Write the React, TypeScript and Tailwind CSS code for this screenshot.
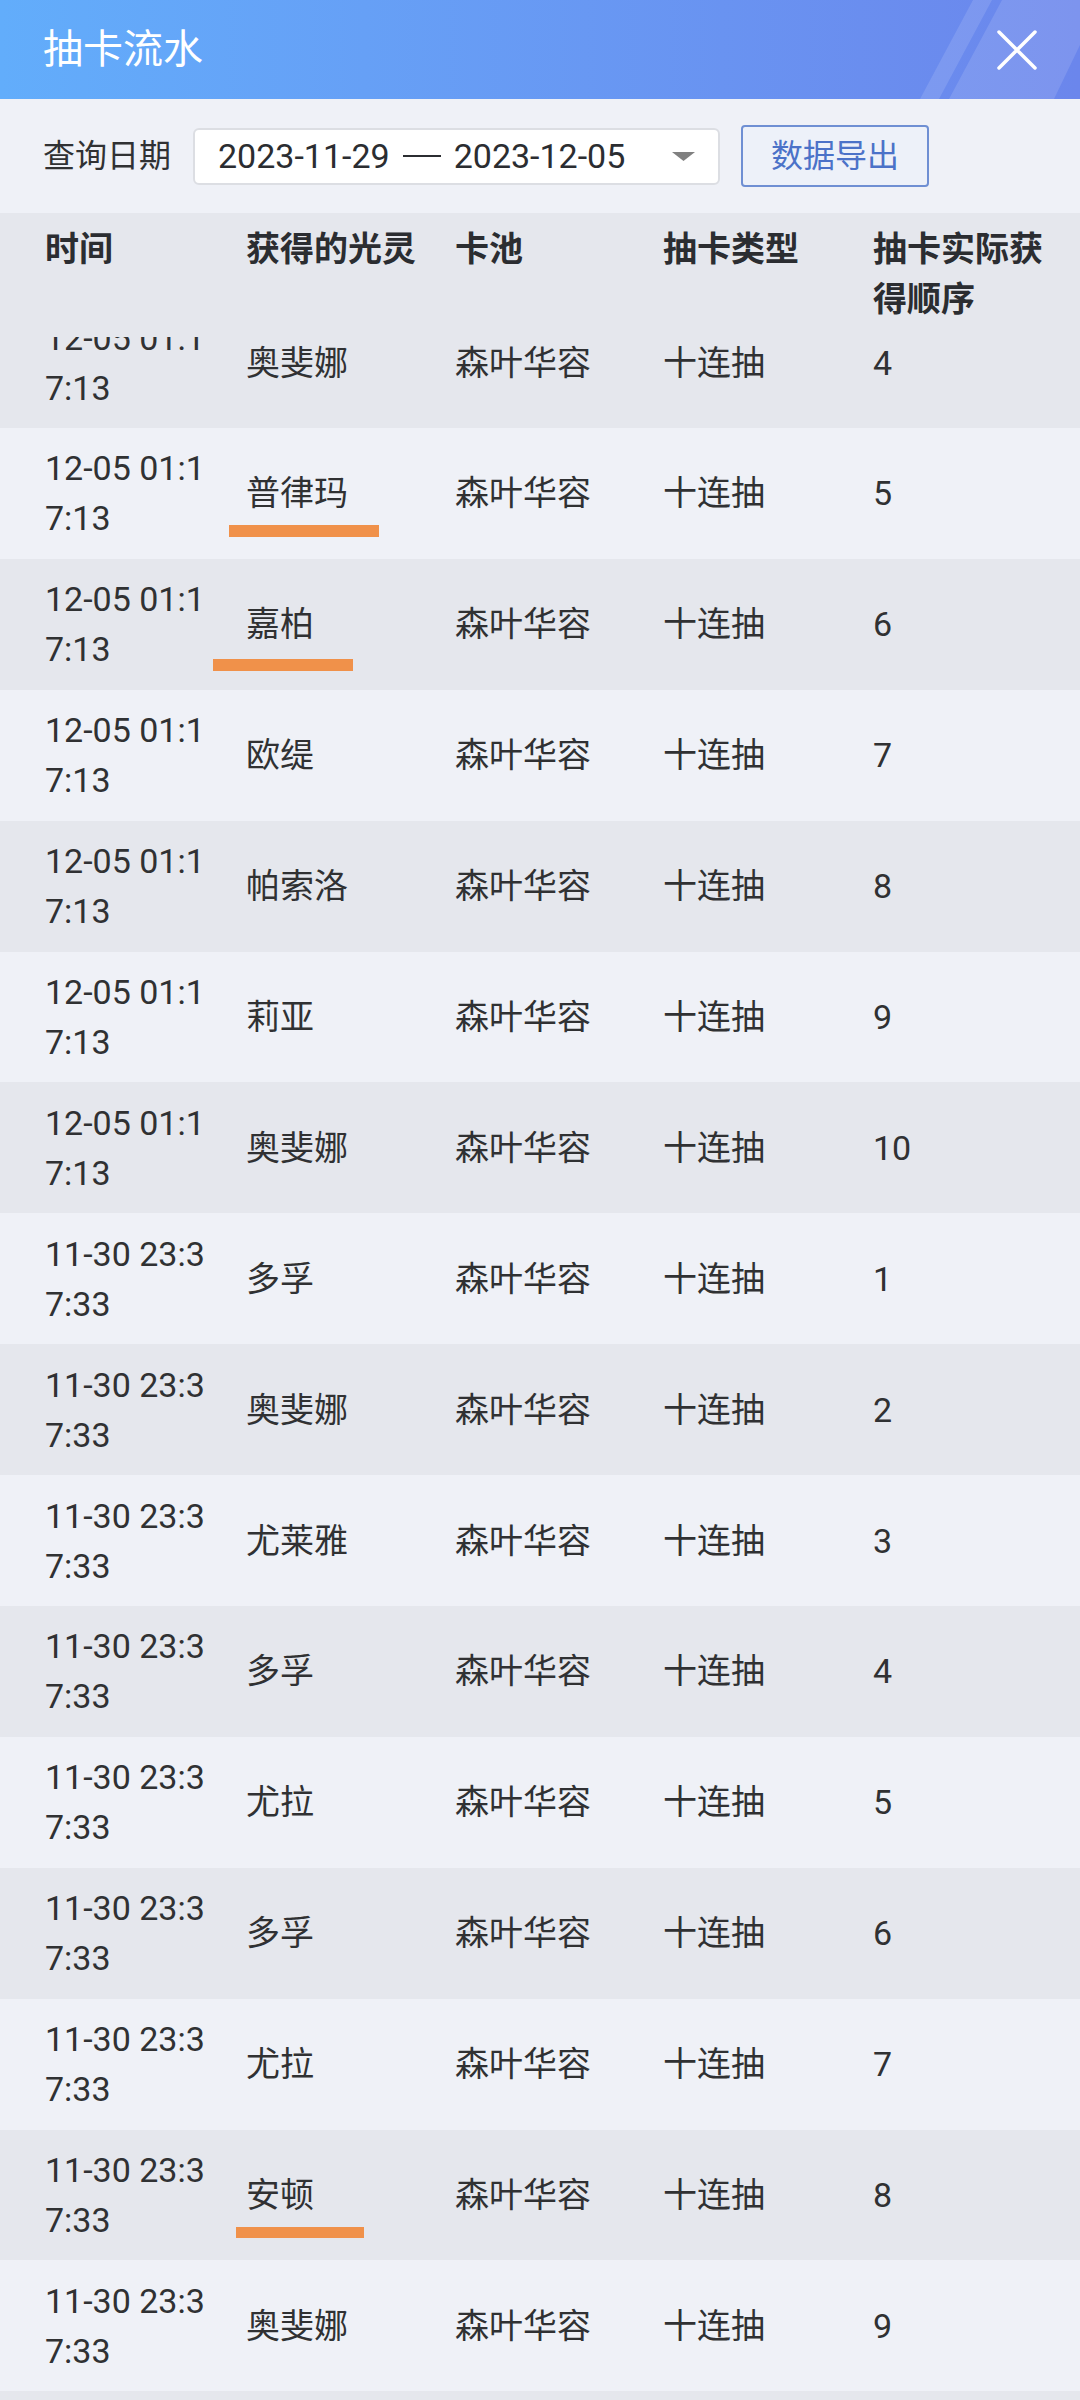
import React from "react";

type Row = {
  date: string; // first line of the wrapped time
  time: string; // second line
  name: string;
  order: number | string;
  mark?: string; // orange annotation under the name
};

const rows: Row[] = [
  { date: "12-05 01:1", time: "7:13", name: "奥斐娜", order: 4 },
  { date: "12-05 01:1", time: "7:13", name: "普律玛", order: 5, mark: "left-[229px] top-[97px] w-[150px] h-[12px]" },
  { date: "12-05 01:1", time: "7:13", name: "嘉柏", order: 6, mark: "left-[213px] top-[100px] w-[140px] h-[12px]" },
  { date: "12-05 01:1", time: "7:13", name: "欧缇", order: 7 },
  { date: "12-05 01:1", time: "7:13", name: "帕索洛", order: 8 },
  { date: "12-05 01:1", time: "7:13", name: "莉亚", order: 9 },
  { date: "12-05 01:1", time: "7:13", name: "奥斐娜", order: 10 },
  { date: "11-30 23:3", time: "7:33", name: "多孚", order: 1 },
  { date: "11-30 23:3", time: "7:33", name: "奥斐娜", order: 2 },
  { date: "11-30 23:3", time: "7:33", name: "尤莱雅", order: 3 },
  { date: "11-30 23:3", time: "7:33", name: "多孚", order: 4 },
  { date: "11-30 23:3", time: "7:33", name: "尤拉", order: 5 },
  { date: "11-30 23:3", time: "7:33", name: "多孚", order: 6 },
  { date: "11-30 23:3", time: "7:33", name: "尤拉", order: 7 },
  { date: "11-30 23:3", time: "7:33", name: "安顿", order: 8, mark: "left-[236px] top-[97px] w-[128px] h-[11px]" },
  { date: "11-30 23:3", time: "7:33", name: "奥斐娜", order: 9 },
];

const cols = "grid grid-cols-[246px_209px_208px_210px_1fr]";

const App = () => {
  return (
    <div className="w-[1080px] h-[2400px] overflow-hidden bg-[#eff1f7] text-[#303133] font-['Roboto','Noto_Sans_CJK_SC',sans-serif]">
      {/* 顶部标题栏 */}
      <div className="relative h-[99px] flex items-center justify-between px-[43px] bg-linear-to-r from-[#62adfb] to-[#6b86ec] overflow-hidden">
        <svg className="absolute right-0 top-0" width="160" height="99" viewBox="0 0 160 99">
          <polygon points="53,0 72,0 19,99 0,99" fill="#ffffff" fillOpacity="0.12" />
          <polygon points="82,0 160,0 160,45 134,99 29,99" fill="#ffffff" fillOpacity="0.12" />
        </svg>
        <span className="relative text-[40px] leading-none text-white">抽卡流水</span>
        <svg className="relative" width="40" height="40" viewBox="0 0 40 40">
          <path d="M2 2 L38 38 M38 2 L2 38" stroke="#ffffff" strokeWidth="3.5" strokeLinecap="round" />
        </svg>
      </div>

      {/* 查询条件 */}
      <div className="h-[114px] flex items-center px-[43px]">
        <span className="text-[32px] text-[#303133] w-[150px]">查询日期</span>
        <div className="w-[527px] h-[57px] flex items-center justify-between pl-[23px] pr-[23px] bg-white border-2 border-[#dcdee3] rounded-[6px]">
          <span className="flex items-center text-[34px] leading-none text-[#2b2d31]">
            <span>2023-11-29</span>
            <span className="mx-[13px] w-[38px] h-[2px] bg-[#2b2d31]" />
            <span>2023-12-05</span>
          </span>
          <svg width="23" height="9" viewBox="0 0 23 9">
            <polygon points="0,0 23,0 11.5,9" fill="#808080" />
          </svg>
        </div>
        <button className="ml-[21px] w-[188px] h-[62px] flex items-center justify-center border-2 border-[#6f8fd3] bg-[#edf1f9] rounded-[4px] text-[32px] text-[#4b72c8]">
          数据导出
        </button>
      </div>

      {/* 表头 */}
      <div className={`${cols} h-[124px] pt-[11px] bg-[#e5e7ed] text-[34px] leading-[50px] font-bold text-[#2b2d31]`}>
        <div className="pl-[45px]">时间</div>
        <div>获得的光灵</div>
        <div>卡池</div>
        <div>抽卡类型</div>
        <div>
          抽卡实际获
          <br />
          得顺序
        </div>
      </div>

      {/* 表体（已向上滚动一部分） */}
      <div className="overflow-hidden">
        <div className="-mt-[39.9px]">
          {rows.map((r, i) => (
            <div
              key={i}
              className={`${cols} relative h-[130.9px] items-center text-[34px] leading-[50px] ${
                i % 2 === 0 ? "bg-[#e5e7ed]" : "bg-[#eff1f7]"
              }`}
            >
              <div className="pl-[45px]">
                <div>{r.date}</div>
                <div>{r.time}</div>
              </div>
              <div>{r.name}</div>
              <div>森叶华容</div>
              <div>十连抽</div>
              <div>{r.order}</div>
              {r.mark && <div className={`absolute bg-[#f0914a] ${r.mark}`} />}
            </div>
          ))}
          {/* 下一行只露出顶部背景 */}
          <div className="h-[130.9px] bg-[#e5e7ed]" />
        </div>
      </div>
    </div>
  );
};

export default App;
